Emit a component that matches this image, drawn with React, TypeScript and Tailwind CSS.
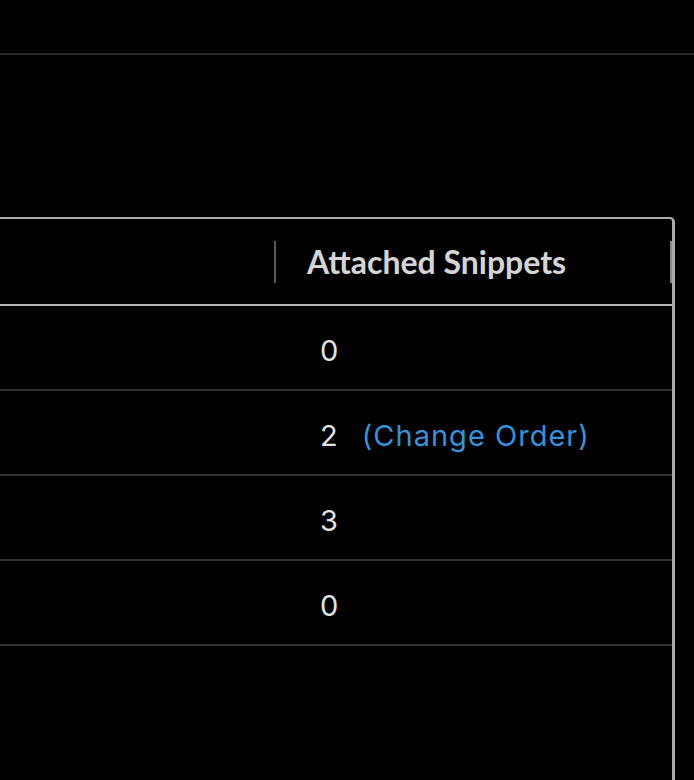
const rows = [
  { count: 0, reorder: false },
  { count: 2, reorder: true },
  { count: 3, reorder: false },
  { count: 0, reorder: false },
];

const App = () => (
  <div className="min-h-[780px] bg-black overflow-hidden">
    <div className="h-[53px]" />
    <div className="h-[2px] bg-[#2c2c2c]" />
    <div className="h-[162px]" />
    <div className="w-[675px] min-h-[563px] border-t-2 border-r-[3px] border-[#a9abae] rounded-tr-[5px]">
      <div className="flex h-[87px] items-center border-b-2 border-[#b4b4b4]">
        <div className="w-[274px]" />
        <div className="h-[42px] w-[2px] bg-[#5a5a5a]" />
        <div
          className="flex-1 pl-[31px] text-[32px] font-bold text-[#d4d4d4]"
          style={{ fontFamily: "Lato, 'Noto Sans', sans-serif" }}
        >
          Attached Snippets
        </div>
        <div className="h-[42px] w-[2px] bg-[#8a8a8a]" />
      </div>
      {rows.map((r, i) => (
        <div key={i} className="flex h-[85px] items-center border-b-2 border-[#303030]">
          <div
            className="ml-[320px] flex items-center gap-[23px] pt-[7px] text-[29px] tracking-[0.035em] text-[#e2e2e2]"
            style={{ fontFamily: "Inter, 'Liberation Sans', sans-serif" }}
          >
            <span>{r.count}</span>
            {r.reorder && <span className="text-[#3592dc]">(Change Order)</span>}
          </div>
        </div>
      ))}
    </div>
  </div>
);

export default App;
